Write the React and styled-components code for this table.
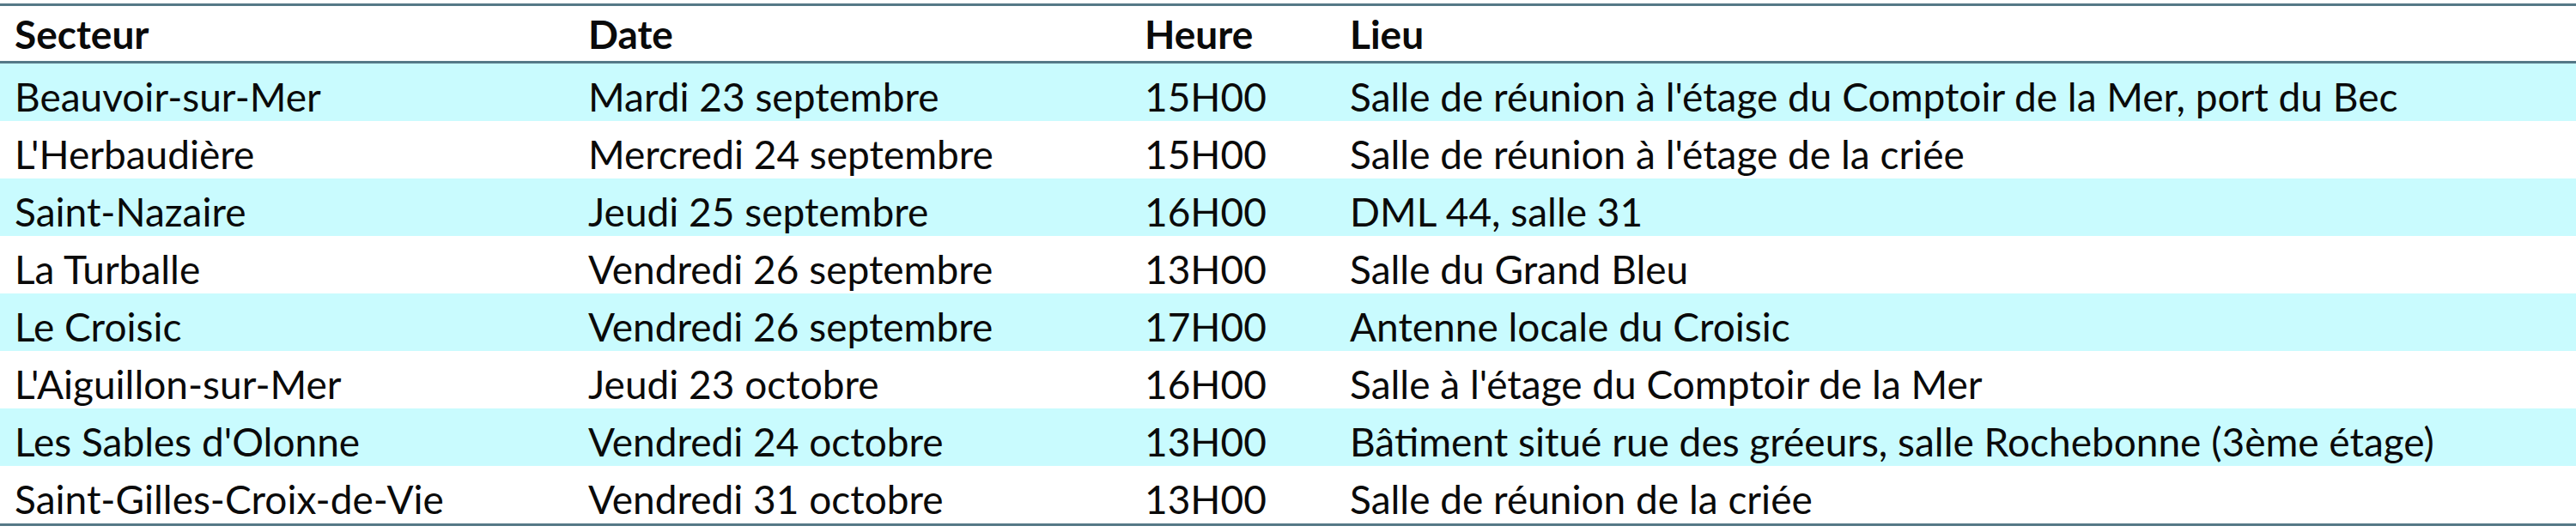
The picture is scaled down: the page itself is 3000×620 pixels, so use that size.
import React from "react";
import styled, { createGlobalStyle } from "styled-components";

const Global = createGlobalStyle`
  html, body { margin: 0; padding: 0; background: #ffffff; }
  body { font-family: Lato, "Open Sans", sans-serif; color: #0a0a0a; }
`;

const Table = styled.div`
  width: 3000px;
  padding-top: 4px;
`;

const Row = styled.div`
  display: grid;
  grid-template-columns: 668px 648px 239px 1fr;
  padding-left: 17px;
  height: ${(p) => p.$h}px;
  align-items: center;
  box-sizing: border-box;
  background: ${(p) => (p.$shade ? "#c9fbfe" : "#ffffff")};
  border-top: ${(p) => (p.$top ? "3px solid #557887" : "none")};
  border-bottom: ${(p) => (p.$bottom ? "3px solid #557887" : "none")};
`;

const Cell = styled.div`
  font-size: 46px;
  font-weight: ${(p) => (p.$head ? 700 : 400)};
  white-space: nowrap;
  padding-top: ${(p) => (p.$head ? 2 : 10)}px;
  line-height: 1;
`;

const rows = [
  ["Beauvoir-sur-Mer", "Mardi 23 septembre", "15H00", "Salle de réunion à l'étage du Comptoir de la Mer, port du Bec"],
  ["L'Herbaudière", "Mercredi 24 septembre", "15H00", "Salle de réunion à l'étage de la criée"],
  ["Saint-Nazaire", "Jeudi 25 septembre", "16H00", "DML 44, salle 31"],
  ["La Turballe", "Vendredi 26 septembre", "13H00", "Salle du Grand Bleu"],
  ["Le Croisic", "Vendredi 26 septembre", "17H00", "Antenne locale du Croisic"],
  ["L'Aiguillon-sur-Mer", "Jeudi 23 octobre", "16H00", "Salle à l'étage du Comptoir de la Mer"],
  ["Les Sables d'Olonne", "Vendredi 24 octobre", "13H00", "Bâtiment situé rue des gréeurs, salle Rochebonne (3ème étage)"],
  ["Saint-Gilles-Croix-de-Vie", "Vendredi 31 octobre", "13H00", "Salle de réunion de la criée"],
];

export default function App() {
  return (
    <>
      <Global />
      <Table>
        <Row $h={70} $top $bottom>
          {["Secteur", "Date", "Heure", "Lieu"].map((h) => (
            <Cell key={h} $head>{h}</Cell>
          ))}
        </Row>
        {rows.map((r, i) => (
          <Row key={i} $h={i === rows.length - 1 ? 70 : 67} $shade={i % 2 === 0} $bottom={i === rows.length - 1}>
            {r.map((c, j) => (
              <Cell key={j}>{c}</Cell>
            ))}
          </Row>
        ))}
      </Table>
    </>
  );
}
